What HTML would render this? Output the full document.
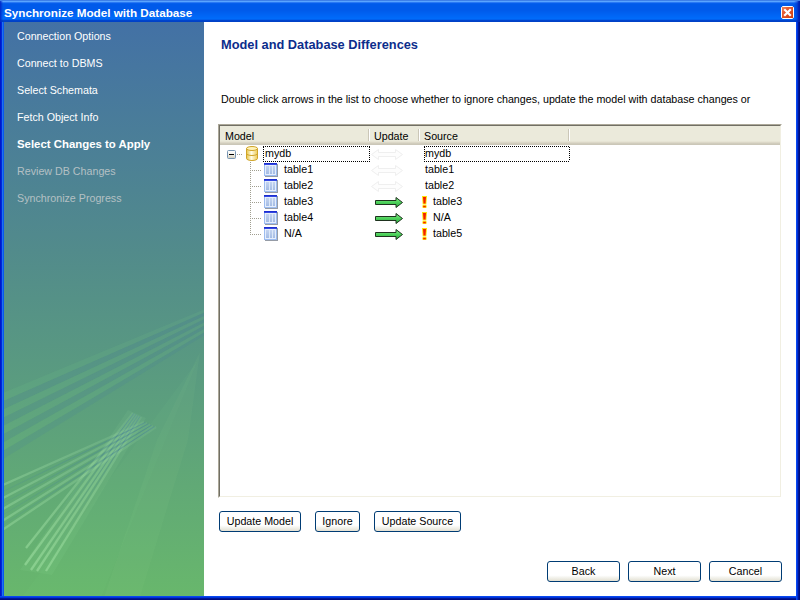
<!DOCTYPE html>
<html><head><meta charset="utf-8">
<style>
*{box-sizing:border-box}
html,body{margin:0;padding:0;width:800px;height:600px;overflow:hidden;background:#fff}
body{position:relative;font-family:"Liberation Sans",sans-serif;font-size:11px;color:#000}
.abs{position:absolute}
#title{left:0;top:0;width:800px;height:22px;background:linear-gradient(to bottom,#3d7fe8 0px,#3d7fe8 1px,#5aa5ff 1px,#5aa5ff 2px,#2a78f4 2px,#2a78f4 3px,#0a62ee 3px,#005aea 4px,#005aea 10px,#0064f4 15px,#006cfa 19px,#0060ee 19px,#0060ee 20px,#0046d0 20px,#0040c4 22px)}
#ttext{left:4px;top:5px;color:#fff;font-weight:bold;font-size:11.7px;white-space:nowrap;line-height:16px}
#lb{left:0;top:22px;width:4px;height:578px;background:linear-gradient(to right,#0018c8 0,#0018c8 1px,#0028d8 1px,#0028d8 2px,#2070f0 2px,#2070f0 3px,#0858f0 3px)}
#rb{left:796px;top:22px;width:4px;height:578px;background:linear-gradient(to right,#0848f0 0,#0848f0 1px,#0030d8 1px,#0030d8 2px,#001898 2px,#001898 3px,#000c80 3px)}
#bb{left:0;top:596px;width:796px;height:4px;background:linear-gradient(to bottom,#0848f0 0,#0848f0 1px,#0034dc 1px,#0034dc 2px,#001898 2px,#001898 3px,#000c80 3px)}
#side{left:4px;top:22px;width:200px;height:574px;background:linear-gradient(to bottom,#4371a5 0%,#528b8b 40%,#68b76c 100%);overflow:hidden}
.si{position:absolute;left:13px;color:#fff;font-size:10.7px;white-space:nowrap;line-height:13px}
.si.b{font-weight:bold;color:#fff;font-size:11.4px}
.si.d{color:#b4c0c4}
#content{left:204px;top:22px;width:592px;height:574px;background:#fff}
.txt{position:absolute;white-space:nowrap;line-height:13px}
.r{font-size:10.7px;line-height:14px}
#heading{left:221px;top:38px;color:#0c2d8c;font-weight:bold;font-size:12.8px;line-height:14px}
#desc{left:221px;top:93px;font-size:10.7px}
#list{left:218px;top:124px;width:564px;height:374px;border:1px solid;border-color:#aca899 #fff #fff #aca899;}
#listin{position:absolute;left:0;top:0;right:0;bottom:0;border:1px solid;border-color:#716f64 #f1efe2 #f1efe2 #716f64;background:#fff;overflow:hidden}
#hdr{position:absolute;left:0;top:0;width:100%;height:19px;background:linear-gradient(to bottom,#ebeadb 0,#ebeadb 15px,#e2dece 16px,#d6d2c2 17px,#cbc7b8 18px)}
.hs{position:absolute;top:3px;width:2px;height:12px;background:linear-gradient(to right,#cbc7b8 0,#cbc7b8 1px,#fff 1px)}
.ht{position:absolute;top:4px;line-height:13px;font-size:10.7px}
.btn{position:absolute;height:21px;border:1px solid #003c74;border-radius:3px;background:linear-gradient(to bottom,#fff 0,#fff 70%,#f0efe8 85%,#e3e0d2 100%);font-size:10.7px;text-align:center;line-height:19px;white-space:nowrap}
</style></head><body>
<div id="title" class="abs"></div>
<div id="ttext" class="abs">Synchronize Model with Database</div>
<svg class="abs" style="left:781px;top:6px" width="13" height="13" viewBox="0 0 13 13">
<defs><linearGradient id="clg" x1="0" y1="0" x2="1" y2="1"><stop offset="0" stop-color="#f08a68"/><stop offset="0.35" stop-color="#e45a30"/><stop offset="1" stop-color="#cc3a0c"/></linearGradient></defs>
<path d="M1.5,0.5 H11.5 L12.5,1.5 V11.5 L11.5,12.5 H1.5 L0.5,11.5 V1.5 Z" fill="url(#clg)" stroke="#fff"/>
<path d="M4,4 L9,9 M9,4 L4,9" stroke="#fff" stroke-width="2.2" stroke-linecap="square"/>
</svg>
<div id="lb" class="abs"></div>
<div id="rb" class="abs"></div>
<div class="abs" style="left:794px;top:1px;width:6px;height:21px;background:linear-gradient(to right,rgba(0,40,200,0) 0,rgba(0,40,200,.5) 3px,#0020b0 5px)"></div>
<div class="abs" style="left:0;top:1px;width:3px;height:21px;background:linear-gradient(to right,#0028c8,rgba(0,60,220,0))"></div>
<div id="bb" class="abs"></div>
<div id="side" class="abs"><!--STREAKS--><svg class="abs" style="left:0;top:0" width="200" height="574" viewBox="4 22 200 574"><defs>
<linearGradient id="lg1" gradientUnits="userSpaceOnUse" x1="140" y1="415" x2="30" y2="570"><stop offset="0" stop-color="#b4f0b4" stop-opacity="0.10"/><stop offset="0.5" stop-color="#b4f0b4" stop-opacity="0.28"/><stop offset="1" stop-color="#b4f0b4" stop-opacity="0.42"/></linearGradient>
<linearGradient id="dg1" gradientUnits="userSpaceOnUse" x1="140" y1="415" x2="30" y2="570"><stop offset="0" stop-color="#3a70a8" stop-opacity="0.30"/><stop offset="0.6" stop-color="#3a70a8" stop-opacity="0.06"/><stop offset="1" stop-color="#3a70a8" stop-opacity="0"/></linearGradient>
<linearGradient id="lg2" gradientUnits="userSpaceOnUse" x1="150" y1="424" x2="4" y2="510"><stop offset="0" stop-color="#b4f0b4" stop-opacity="0.10"/><stop offset="1" stop-color="#b4f0b4" stop-opacity="0.32"/></linearGradient>
<linearGradient id="dg2" gradientUnits="userSpaceOnUse" x1="150" y1="424" x2="4" y2="510"><stop offset="0" stop-color="#3a70a8" stop-opacity="0.30"/><stop offset="1" stop-color="#3a70a8" stop-opacity="0.08"/></linearGradient>
</defs><polygon points="200.0,352.0 157.0,440.0 103.0,600.0 139.0,600.0 188.0,440.0" fill="rgba(170,240,160,0.05)"/><polygon points="198.0,360.0 20.0,600.0 100.0,600.0" fill="rgba(170,240,160,0.03)"/><polygon points="205.0,309.0 205.0,312.2 3.0,401.2 3.0,393.0" fill="rgba(130,220,140,0.10)"/><polygon points="205.0,312.2 205.0,315.5 3.0,409.5 3.0,401.2" fill="rgba(60,110,170,0.11)"/><polygon points="205.0,315.5 205.0,318.8 3.0,417.8 3.0,409.5" fill="rgba(130,220,140,0.10)"/><polygon points="205.0,318.8 205.0,322.0 3.0,426.0 3.0,417.8" fill="rgba(60,110,170,0.11)"/><polygon points="205.0,322.0 205.0,325.2 3.0,434.2 3.0,426.0" fill="rgba(130,220,140,0.10)"/><polygon points="205.0,325.2 205.0,328.5 3.0,442.5 3.0,434.2" fill="rgba(60,110,170,0.11)"/><polygon points="205.0,328.5 205.0,331.8 3.0,450.8 3.0,442.5" fill="rgba(130,220,140,0.10)"/><polygon points="205.0,331.8 205.0,335.0 3.0,459.0 3.0,450.8" fill="rgba(60,110,170,0.11)"/><polygon points="128.0,410.0 146.0,418.0 52.0,575.0 20.0,570.0" fill="rgba(170,240,170,0.07)"/><line x1="133.0" y1="413.0" x2="26.0" y2="548.0" stroke="url(#lg1)" stroke-width="2.3"/><line x1="134.0" y1="413.5" x2="25.5" y2="556.5" stroke="url(#dg1)" stroke-width="1.2"/><line x1="135.0" y1="414.0" x2="25.0" y2="565.0" stroke="url(#lg1)" stroke-width="2.3"/><line x1="136.0" y1="414.5" x2="28.0" y2="567.5" stroke="url(#dg1)" stroke-width="1.2"/><line x1="137.0" y1="415.0" x2="31.0" y2="570.0" stroke="url(#lg1)" stroke-width="2.3"/><line x1="138.0" y1="415.5" x2="34.0" y2="570.5" stroke="url(#dg1)" stroke-width="1.2"/><line x1="139.0" y1="416.0" x2="37.0" y2="571.0" stroke="url(#lg1)" stroke-width="2.3"/><line x1="140.0" y1="416.5" x2="41.5" y2="571.0" stroke="url(#dg1)" stroke-width="1.2"/><line x1="141.0" y1="417.0" x2="46.0" y2="571.0" stroke="url(#lg1)" stroke-width="2.3"/><line x1="144.0" y1="422.0" x2="3.0" y2="485.0" stroke="url(#lg2)" stroke-width="2.3"/><line x1="145.5" y1="422.5" x2="3.0" y2="491.5" stroke="url(#dg2)" stroke-width="1.3"/><line x1="147.0" y1="423.0" x2="3.0" y2="498.0" stroke="url(#lg2)" stroke-width="2.3"/><line x1="148.5" y1="423.8" x2="3.0" y2="503.5" stroke="url(#dg2)" stroke-width="1.3"/><line x1="150.0" y1="424.5" x2="3.0" y2="509.0" stroke="url(#lg2)" stroke-width="2.3"/><line x1="151.5" y1="425.2" x2="3.0" y2="514.8" stroke="url(#dg2)" stroke-width="1.3"/><line x1="153.0" y1="426.0" x2="3.0" y2="520.5" stroke="url(#lg2)" stroke-width="2.3"/><line x1="154.5" y1="426.5" x2="3.0" y2="525.0" stroke="url(#dg2)" stroke-width="1.3"/><line x1="156.0" y1="427.0" x2="3.0" y2="529.6" stroke="url(#lg2)" stroke-width="2.3"/></svg><!--/STREAKS-->
 <div class="si" style="top:8px">Connection Options</div>
 <div class="si" style="top:35px">Connect to DBMS</div>
 <div class="si" style="top:62px">Select Schemata</div>
 <div class="si" style="top:89px">Fetch Object Info</div>
 <div class="si b" style="top:116px">Select Changes to Apply</div>
 <div class="si d" style="top:143px">Review DB Changes</div>
 <div class="si d" style="top:170px">Synchronize Progress</div>
</div>
<div id="content" class="abs"></div>
<div id="heading" class="txt">Model and Database Differences</div>
<div id="desc" class="txt">Double click arrows in the list to choose whether to ignore changes, update the model with database changes or</div>
<div id="list" class="abs"><div id="listin">
 <div id="hdr">
  <div class="ht" style="left:5px">Model</div>
  <div class="hs" style="left:148px"></div>
  <div class="ht" style="left:154px">Update</div>
  <div class="hs" style="left:198px"></div>
  <div class="ht" style="left:204px">Source</div>
  <div class="hs" style="left:348px"></div>
 </div>
</div></div>
<svg class="abs" style="left:0;top:0" width="800" height="600" viewBox="0 0 800 600">
<defs>
<linearGradient id="exg" x1="0" y1="0" x2="0" y2="1"><stop offset="0" stop-color="#ffffff"/><stop offset="0.5" stop-color="#f4f2ea"/><stop offset="1" stop-color="#cfcab8"/></linearGradient>
<linearGradient id="grn" x1="0" y1="0" x2="0" y2="1"><stop offset="0" stop-color="#8cf08c"/><stop offset="0.5" stop-color="#4cd05a"/><stop offset="1" stop-color="#2aa83a"/></linearGradient>
<linearGradient id="dbg" x1="0" y1="0" x2="1" y2="0"><stop offset="0" stop-color="#e8c444"/><stop offset="0.45" stop-color="#fffce6"/><stop offset="1" stop-color="#ecca54"/></linearGradient>
<linearGradient id="tbg" x1="0" y1="0" x2="0" y2="1"><stop offset="0" stop-color="#c4d4f0"/><stop offset="1" stop-color="#a4bce4"/></linearGradient>
<g id="tbl">
 <rect x="1" y="1" width="13" height="13" fill="#505a6a" opacity="0.6"/>
 <rect x="0" y="0" width="13" height="13" fill="#9cbcf0"/>
 <rect x="1" y="2" width="11" height="10" fill="#e6eefc"/>
 <rect x="2" y="3" width="9" height="8" fill="url(#tbg)"/>
 <rect x="5" y="3" width="1" height="8" fill="#dce8f8"/>
 <rect x="8" y="3" width="1" height="8" fill="#dce8f8"/>
 <rect x="0" y="0" width="13" height="1" fill="#1c2ed0"/>
 <rect x="0" y="1" width="13" height="1" fill="#3448e0"/>
</g>
<g id="garr"><polygon points="0.5,5.5 7.5,0.5 7.5,3.5 24.5,3.5 24.5,0.5 31.5,5.5 24.5,10.5 24.5,7.5 7.5,7.5 7.5,10.5" fill="#fdfdfd" stroke="#efefef"/></g>
<g id="arr"><polygon points="0.5,3.5 21,3.5 21,0.5 27.5,5.5 21,10.5 21,7.5 0.5,7.5" fill="url(#grn)" stroke="#1e321e"/></g>
<g id="exc"><path d="M0,0 H5 L4.3,8.6 H0.7 Z" fill="#ffe400"/><rect x="0.4" y="9" width="4.2" height="3" rx="0.8" fill="#ffe400"/><path d="M1,1 H4 L3.5,7.6 H1.5 Z" fill="#f42000"/><rect x="1.2" y="9.8" width="2.6" height="1.5" fill="#f42000"/></g>
</defs>
<!-- expander -->
<rect x="227.5" y="150.5" width="8" height="8" rx="1" fill="url(#exg)" stroke="#7896b4"/>
<rect x="229" y="154" width="5" height="1" fill="#000"/>
<!-- tree dots -->
<g fill="#a09e90">
 <rect x="237" y="154" width="1" height="1"/><rect x="239" y="154" width="1" height="1"/><rect x="241" y="154" width="1" height="1"/>
</g>
<line x1="250.5" y1="162" x2="250.5" y2="235" stroke="#a09e90" stroke-dasharray="1,1"/>
<line x1="252" y1="170.5" x2="262" y2="170.5" stroke="#a09e90" stroke-dasharray="1,1"/>
<line x1="252" y1="186.5" x2="262" y2="186.5" stroke="#a09e90" stroke-dasharray="1,1"/>
<line x1="252" y1="202.5" x2="262" y2="202.5" stroke="#a09e90" stroke-dasharray="1,1"/>
<line x1="252" y1="218.5" x2="262" y2="218.5" stroke="#a09e90" stroke-dasharray="1,1"/>
<line x1="252" y1="234.5" x2="262" y2="234.5" stroke="#a09e90" stroke-dasharray="1,1"/>
<!-- db icon -->
<g transform="translate(246,146)">
 <path d="M0.5,2.5 L0.5,12.5 A5.5,2 0 0 0 11.5,12.5 L11.5,2.5 Z" fill="url(#dbg)" stroke="#d0a428"/>
 <path d="M0.5,7.5 A5.5,2 0 0 0 11.5,7.5" fill="none" stroke="#d0a428"/>
 <ellipse cx="6" cy="2.5" rx="5.5" ry="2" fill="#fff2b8" stroke="#d0a428"/>
</g>
<use href="#tbl" x="264" y="163"/>
<use href="#tbl" x="264" y="179"/>
<use href="#tbl" x="264" y="195"/>
<use href="#tbl" x="264" y="211"/>
<use href="#tbl" x="264" y="227"/>
<!-- focus rects -->
<g stroke="#000" stroke-dasharray="1,1" fill="none">
 <line x1="263" y1="146.5" x2="370" y2="146.5"/><line x1="263" y1="161.5" x2="370" y2="161.5"/>
 <line x1="263.5" y1="147" x2="263.5" y2="161"/><line x1="369.5" y1="147" x2="369.5" y2="161"/>
 <line x1="424" y1="146.5" x2="570" y2="146.5"/><line x1="424" y1="161.5" x2="570" y2="161.5"/>
 <line x1="424.5" y1="147" x2="424.5" y2="161"/><line x1="569.5" y1="147" x2="569.5" y2="161"/>
</g>

<use href="#garr" x="371" y="149"/>
<use href="#garr" x="371" y="165"/>
<use href="#garr" x="371" y="181"/>
<use href="#arr" x="375" y="197"/>
<use href="#arr" x="375" y="213"/>
<use href="#arr" x="375" y="229"/>
<use href="#exc" x="422" y="196"/>
<use href="#exc" x="422" y="212"/>
<use href="#exc" x="422" y="228"/>
</svg>
<div class="txt r" style="left:265px;top:146px">mydb</div>
<div class="txt r" style="left:284px;top:162px">table1</div>
<div class="txt r" style="left:284px;top:178px">table2</div>
<div class="txt r" style="left:284px;top:194px">table3</div>
<div class="txt r" style="left:284px;top:210px">table4</div>
<div class="txt r" style="left:284px;top:226px">N/A</div>
<div class="txt r" style="left:425px;top:146px">mydb</div>
<div class="txt r" style="left:425px;top:162px">table1</div>
<div class="txt r" style="left:425px;top:178px">table2</div>
<div class="txt r" style="left:433px;top:194px">table3</div>
<div class="txt r" style="left:433px;top:210px">N/A</div>
<div class="txt r" style="left:433px;top:226px">table5</div>
<div class="btn" style="left:219px;top:511px;width:82px">Update Model</div>
<div class="btn" style="left:315px;top:511px;width:45px">Ignore</div>
<div class="btn" style="left:374px;top:511px;width:87px">Update Source</div>
<div class="btn" style="left:547px;top:561px;width:73px">Back</div>
<div class="btn" style="left:628px;top:561px;width:73px">Next</div>
<div class="btn" style="left:709px;top:561px;width:73px">Cancel</div>
</body></html>
